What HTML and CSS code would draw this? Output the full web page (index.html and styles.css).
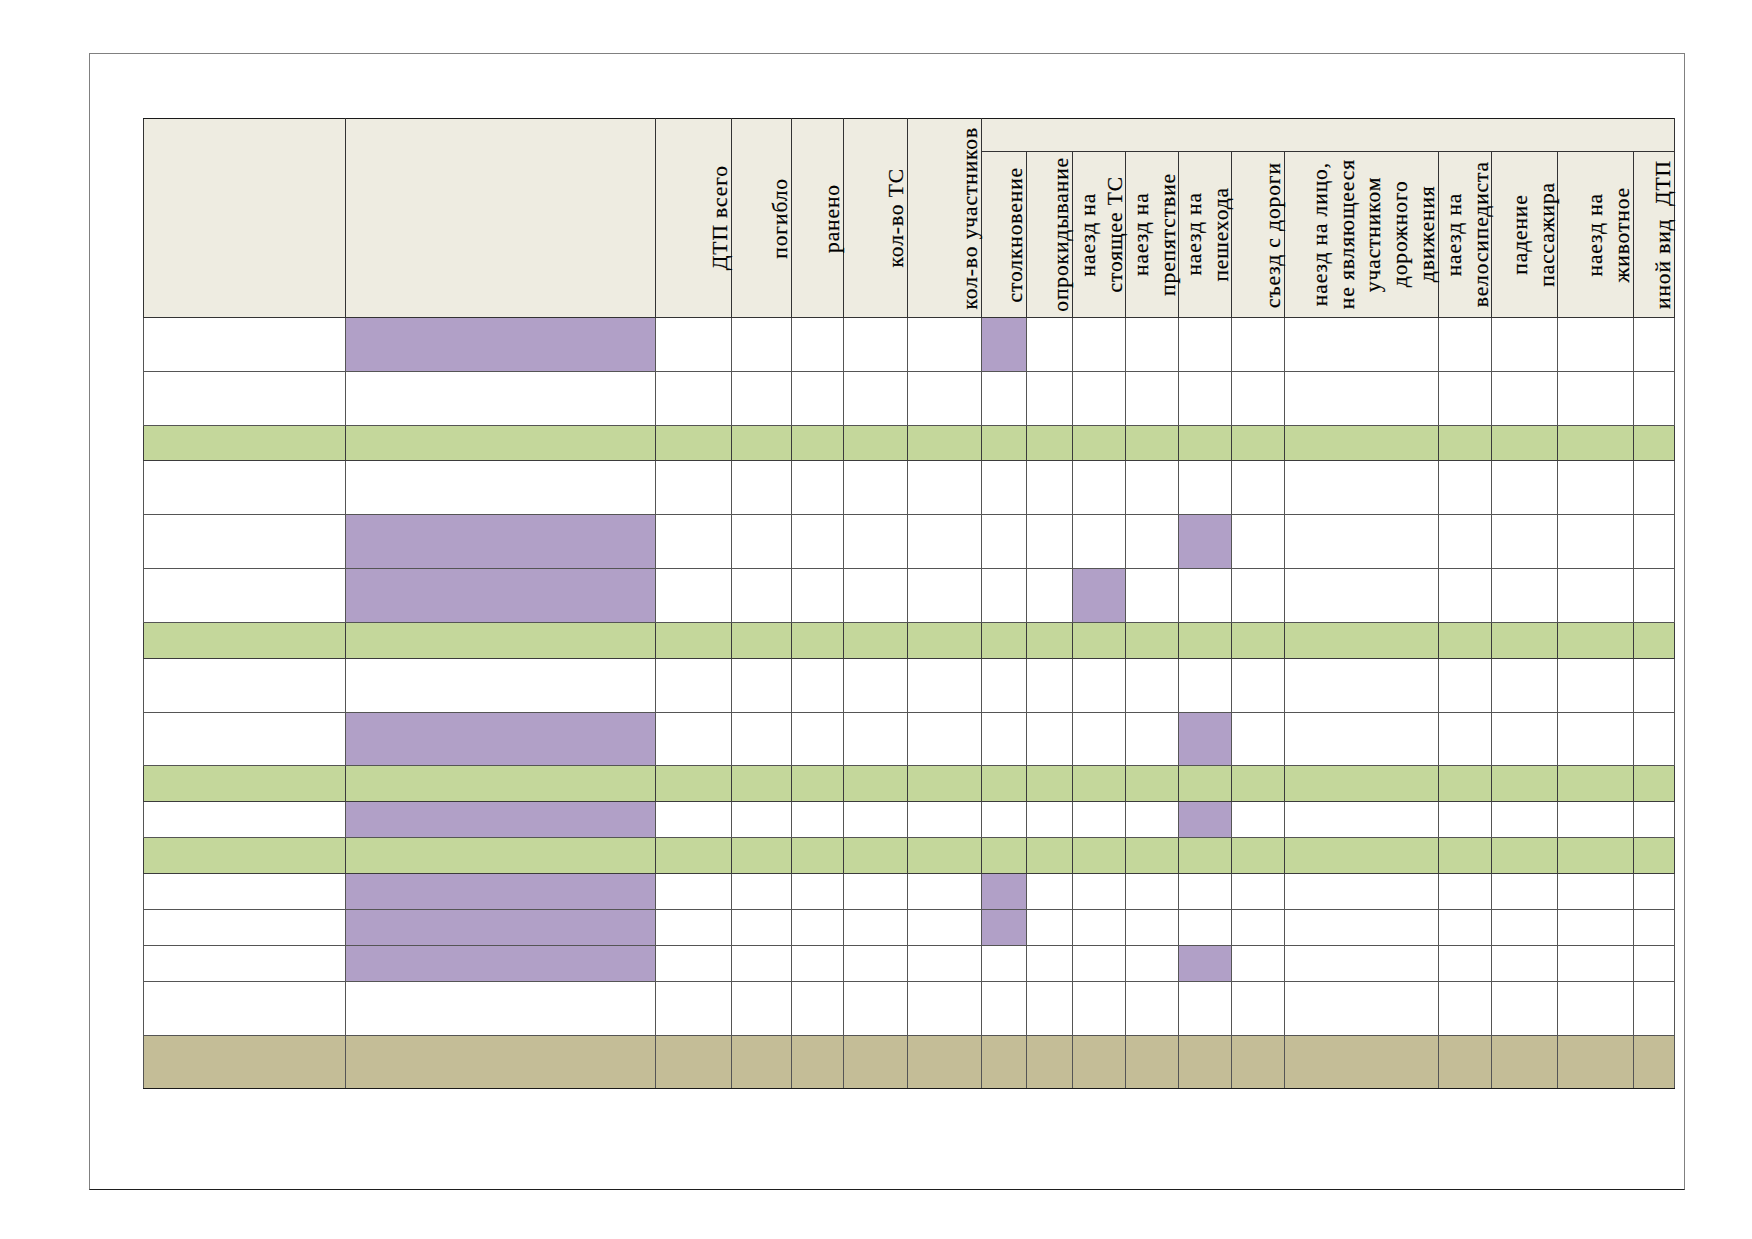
FILE: index.html
```html
<!DOCTYPE html>
<html lang="ru">
<head>
<meta charset="utf-8">
<title>ДТП</title>
<link rel="stylesheet" href="styles.css">
</head>
<body>
<div class="page">
  <table class="report">
    <colgroup>
      <col class="col-region"><col class="col-name"><col class="col-total"><col class="col-killed"><col class="col-injured"><col class="col-vehicles"><col class="col-participants"><col class="col-collision"><col class="col-rollover"><col class="col-parked"><col class="col-obstacle"><col class="col-pedestrian"><col class="col-offroad"><col class="col-nonpart"><col class="col-cyclist"><col class="col-passenger"><col class="col-animal"><col class="col-other">
    </colgroup>
    <thead>
      <tr class="head-top">
        <th rowspan="2"></th>
        <th rowspan="2"></th>
        <th rowspan="2"><span class="rot">ДТП всего</span></th>
        <th rowspan="2"><span class="rot">погибло</span></th>
        <th rowspan="2"><span class="rot">ранено</span></th>
        <th rowspan="2"><span class="rot">кол-во ТС</span></th>
        <th rowspan="2"><span class="rot">кол-во участников</span></th>
        <th colspan="11"></th>
      </tr>
      <tr class="head-sub">
        <th><span class="rot">столкновение</span></th>
        <th><span class="rot">опрокидывание</span></th>
        <th><span class="rot">наезд на<br>стоящее ТС</span></th>
        <th><span class="rot">наезд на<br>препятствие</span></th>
        <th><span class="rot">наезд на<br>пешехода</span></th>
        <th><span class="rot">съезд с дороги</span></th>
        <th><span class="rot">наезд на лицо,<br>не являющееся<br>участником<br>дорожного<br>движения</span></th>
        <th><span class="rot">наезд на<br>велосипедиста</span></th>
        <th><span class="rot">падение<br>пассажира</span></th>
        <th><span class="rot">наезд на<br>животное</span></th>
        <th><span class="rot">иной вид&nbsp; ДТП</span></th>
      </tr>
    </thead>
    <tbody>
      <tr class="tall"><td></td><td class="hl"></td><td></td><td></td><td></td><td></td><td></td><td class="hl"></td><td></td><td></td><td></td><td></td><td></td><td></td><td></td><td></td><td></td><td></td></tr>
      <tr class="tall"><td></td><td></td><td></td><td></td><td></td><td></td><td></td><td></td><td></td><td></td><td></td><td></td><td></td><td></td><td></td><td></td><td></td><td></td></tr>
      <tr class="short group"><td></td><td></td><td></td><td></td><td></td><td></td><td></td><td></td><td></td><td></td><td></td><td></td><td></td><td></td><td></td><td></td><td></td><td></td></tr>
      <tr class="tall"><td></td><td></td><td></td><td></td><td></td><td></td><td></td><td></td><td></td><td></td><td></td><td></td><td></td><td></td><td></td><td></td><td></td><td></td></tr>
      <tr class="tall"><td></td><td class="hl"></td><td></td><td></td><td></td><td></td><td></td><td></td><td></td><td></td><td></td><td class="hl"></td><td></td><td></td><td></td><td></td><td></td><td></td></tr>
      <tr class="tall"><td></td><td class="hl"></td><td></td><td></td><td></td><td></td><td></td><td></td><td></td><td class="hl"></td><td></td><td></td><td></td><td></td><td></td><td></td><td></td><td></td></tr>
      <tr class="short group"><td></td><td></td><td></td><td></td><td></td><td></td><td></td><td></td><td></td><td></td><td></td><td></td><td></td><td></td><td></td><td></td><td></td><td></td></tr>
      <tr class="tall"><td></td><td></td><td></td><td></td><td></td><td></td><td></td><td></td><td></td><td></td><td></td><td></td><td></td><td></td><td></td><td></td><td></td><td></td></tr>
      <tr class="tall"><td></td><td class="hl"></td><td></td><td></td><td></td><td></td><td></td><td></td><td></td><td></td><td></td><td class="hl"></td><td></td><td></td><td></td><td></td><td></td><td></td></tr>
      <tr class="short group"><td></td><td></td><td></td><td></td><td></td><td></td><td></td><td></td><td></td><td></td><td></td><td></td><td></td><td></td><td></td><td></td><td></td><td></td></tr>
      <tr class="short"><td></td><td class="hl"></td><td></td><td></td><td></td><td></td><td></td><td></td><td></td><td></td><td></td><td class="hl"></td><td></td><td></td><td></td><td></td><td></td><td></td></tr>
      <tr class="short group"><td></td><td></td><td></td><td></td><td></td><td></td><td></td><td></td><td></td><td></td><td></td><td></td><td></td><td></td><td></td><td></td><td></td><td></td></tr>
      <tr class="short"><td></td><td class="hl"></td><td></td><td></td><td></td><td></td><td></td><td class="hl"></td><td></td><td></td><td></td><td></td><td></td><td></td><td></td><td></td><td></td><td></td></tr>
      <tr class="short"><td></td><td class="hl"></td><td></td><td></td><td></td><td></td><td></td><td class="hl"></td><td></td><td></td><td></td><td></td><td></td><td></td><td></td><td></td><td></td><td></td></tr>
      <tr class="short"><td></td><td class="hl"></td><td></td><td></td><td></td><td></td><td></td><td></td><td></td><td></td><td></td><td class="hl"></td><td></td><td></td><td></td><td></td><td></td><td></td></tr>
      <tr class="tall"><td></td><td></td><td></td><td></td><td></td><td></td><td></td><td></td><td></td><td></td><td></td><td></td><td></td><td></td><td></td><td></td><td></td><td></td></tr>
      <tr class="tall total"><td></td><td></td><td></td><td></td><td></td><td></td><td></td><td></td><td></td><td></td><td></td><td></td><td></td><td></td><td></td><td></td><td></td><td></td></tr>
    </tbody>
  </table>
</div>
</body>
</html>
```

FILE: styles.css
```css
html, body {
  margin: 0;
  padding: 0;
  background: #ffffff;
}

body {
  font-family: "Liberation Serif", "Times New Roman", serif;
  color: #000;
}

.page {
  box-sizing: border-box;
  margin: 53px 0 0 89px;
  width: 1596px;
  height: 1137px;
  border: 1px solid #808080;
  border-bottom-color: #1e1e1e;
  padding: 64px 0 0 53px;
}

.report {
  border-collapse: collapse;
  table-layout: fixed;
  width: 1531px;
  border: 1px solid #1a1a1a;
}

.col-region { width: 202px; }
.col-name { width: 310px; }
.col-total { width: 76px; }
.col-killed { width: 60px; }
.col-injured { width: 52px; }
.col-vehicles { width: 64px; }
.col-participants { width: 74px; }
.col-collision { width: 45px; }
.col-rollover { width: 46px; }
.col-parked { width: 53px; }
.col-obstacle { width: 53px; }
.col-pedestrian { width: 53px; }
.col-offroad { width: 53px; }
.col-nonpart { width: 153.5px; }
.col-cyclist { width: 53.5px; }
.col-passenger { width: 66px; }
.col-animal { width: 75.5px; }
.col-other { width: 41px; }

.report th,
.report td {
  padding: 0;
  border: 1px solid #555;
}

.report th {
  background: #eeece1;
  font-weight: normal;
  vertical-align: middle;
  text-align: right;
  border-color: #333;
}

.report thead tr:first-child th {
  border-top-color: #1a1a1a;
}

.head-top { height: 33px; }
.head-sub { height: 166px; }

.rot {
  display: block;
  margin-left: auto;
  margin-right: -3px;
  writing-mode: vertical-rl;
  transform: rotate(180deg);
  white-space: nowrap;
  text-align: center;
  font-size: 21.5px;
  line-height: 26.7px;
  letter-spacing: 0.9px;
  -webkit-text-stroke: 0.2px #000;
}

.tall { height: 53.8px; }
.short { height: 35.9px; }

.report td { background: #ffffff; }
.report .group td { background: #c4d79b; border-color: #3b3b3b; }
.report .total td { background: #c4bd97; border-bottom-color: #1a1a1a; }
.report td.hl { background: #b1a0c7; }
```
